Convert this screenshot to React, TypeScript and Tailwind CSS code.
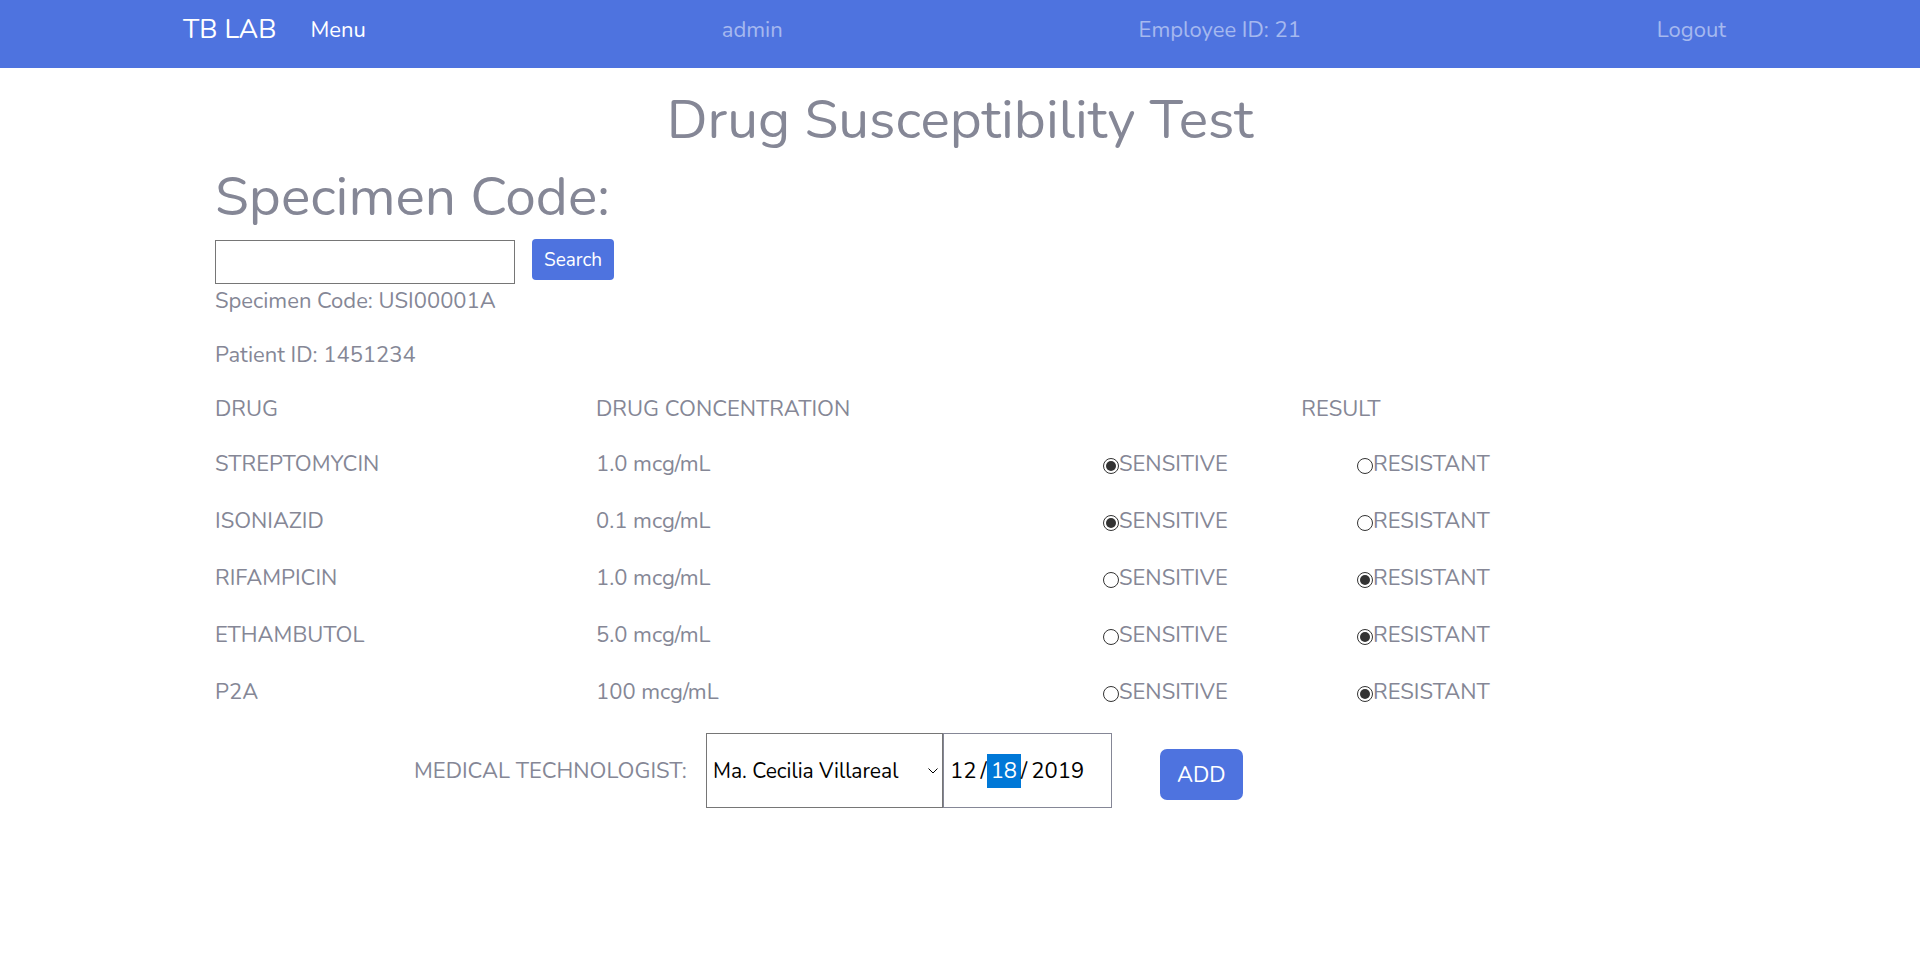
import { useState } from "react";

type Result = "SENSITIVE" | "RESISTANT";

interface Drug {
  name: string;
  concentration: string;
  result: Result;
}

const drugs: Drug[] = [
  { name: "STREPTOMYCIN", concentration: "1.0 mcg/mL", result: "SENSITIVE" },
  { name: "ISONIAZID", concentration: "0.1 mcg/mL", result: "SENSITIVE" },
  { name: "RIFAMPICIN", concentration: "1.0 mcg/mL", result: "RESISTANT" },
  { name: "ETHAMBUTOL", concentration: "5.0 mcg/mL", result: "RESISTANT" },
  { name: "P2A", concentration: "100 mcg/mL", result: "RESISTANT" },
];

const options: Result[] = ["SENSITIVE", "RESISTANT"];

function NavBar() {
  return (
    <header className="bg-[#4e73df]">
      <nav className="mx-auto flex h-[68px] max-w-[1588px] items-start gap-[34px] pt-[13px] pr-7 pl-[17px] leading-[34px] text-white/50">
        <a href="#" className="text-[27px] text-white">
          TB LAB
        </a>
        <div className="flex grow justify-between">
          <a href="#menu" className="text-white">
            Menu
          </a>
          <a href="#account">admin</a>
          <a href="#employee">Employee ID: 21</a>
          <a href="#logout">Logout</a>
        </div>
      </nav>
    </header>
  );
}

function ResultRadio({ drug, option }: { drug: Drug; option: Result }) {
  return (
    <label className="flex items-center">
      <input
        type="radio"
        name={drug.name}
        value={option}
        defaultChecked={drug.result === option}
        className="mt-1 size-4 shrink-0 appearance-none rounded-full border border-[#333] bg-clip-content p-[2px] checked:bg-[#333]"
      />
      {option}
    </label>
  );
}

export default function App() {
  const [code, setCode] = useState("");
  const [date, setDate] = useState("2019-12-18");

  return (
    <div className="min-h-screen bg-white font-['Nunito','Lato',sans-serif] text-[22px] leading-[34px] text-[#858796]">
      <NavBar />
      <main className="mx-auto max-w-[1524px]">
        <h1 className="pt-[18px] text-center text-[55px] leading-[67px]">Drug Susceptibility Test</h1>
        <form className="px-[17px] pt-[10px]" onSubmit={(e) => e.preventDefault()}>
          <label htmlFor="code" className="block text-[55px] leading-[67px]">
            Specimen Code:
          </label>
          <div className="mt-[10px] flex items-start gap-[17px]">
            <input
              id="code"
              value={code}
              onChange={(e) => setCode(e.target.value)}
              className="h-[44px] w-[300px] border border-[#767676] px-1 text-black outline-none"
            />
            <button
              type="submit"
              className="-mt-px h-[41px] rounded bg-[#4e73df] px-3 text-[19px] text-white"
            >
              Search
            </button>
          </div>
        </form>
        <p className="mb-5 px-[17px]">Specimen Code: USI00001A</p>
        <p className="mb-5 px-[17px]">Patient ID: 1451234</p>

        <form onSubmit={(e) => e.preventDefault()}>
          <table className="w-full table-fixed text-left">
            <colgroup>
              <col className="w-3/12" />
              <col className="w-4/12" />
              <col className="w-2/12" />
              <col className="w-2/12" />
              <col className="w-1/12" />
            </colgroup>
            <thead>
              <tr className="h-[55px] align-top">
                <th className="px-[17px] font-normal">DRUG</th>
                <th className="px-[17px] font-normal">DRUG CONCENTRATION</th>
                <th colSpan={2} className="px-[17px] text-center font-normal">
                  RESULT
                </th>
                <td />
              </tr>
            </thead>
            <tbody>
              {drugs.map((drug) => (
                <tr key={drug.name} className="h-[57px] align-top">
                  <td className="px-[17px]">{drug.name}</td>
                  <td className="px-[17px]">{drug.concentration}</td>
                  {options.map((option) => (
                    <td key={option} className="px-4">
                      <ResultRadio drug={drug} option={option} />
                    </td>
                  ))}
                  <td />
                </tr>
              ))}
            </tbody>
          </table>

          <div className="mt-px ml-[216px] flex items-center">
            <label htmlFor="technologist" className="w-[292px]">
              MEDICAL TECHNOLOGIST:
            </label>
            <div className="relative">
              <select
                id="technologist"
                className="block h-[75px] w-[237px] appearance-none border border-[#767676] bg-white pr-8 pl-[6px] text-[21px] text-black outline-none"
              >
                <option>Ma. Cecilia Villareal</option>
              </select>
              <svg
                viewBox="0 0 10 6"
                className="pointer-events-none absolute top-[35px] right-[5px] h-[6px] w-[10px] fill-none stroke-black"
              >
                <path d="M.5.5 5 5 9.5.5" />
              </svg>
            </div>
            <input
              type="date"
              aria-label="Date"
              value={date}
              onChange={(e) => setDate(e.target.value)}
              className="h-[75px] w-[169px] border border-[#858796] pl-[5px] text-black outline-none [&::-webkit-calendar-picker-indicator]:hidden [&::-webkit-datetime-edit-day-field]:rounded-none [&::-webkit-datetime-edit-day-field]:bg-[#0078d7] [&::-webkit-datetime-edit-day-field]:px-1 [&::-webkit-datetime-edit-day-field]:py-[3px] [&::-webkit-datetime-edit-day-field]:text-white [&::-webkit-datetime-edit-month-field]:pr-1 [&::-webkit-datetime-edit-year-field]:pl-1"
            />
            <button
              type="submit"
              className="mt-2 ml-12 h-[51px] rounded-[7px] bg-[#4e73df] px-[17px] text-white"
            >
              ADD
            </button>
          </div>
        </form>
      </main>
    </div>
  );
}
